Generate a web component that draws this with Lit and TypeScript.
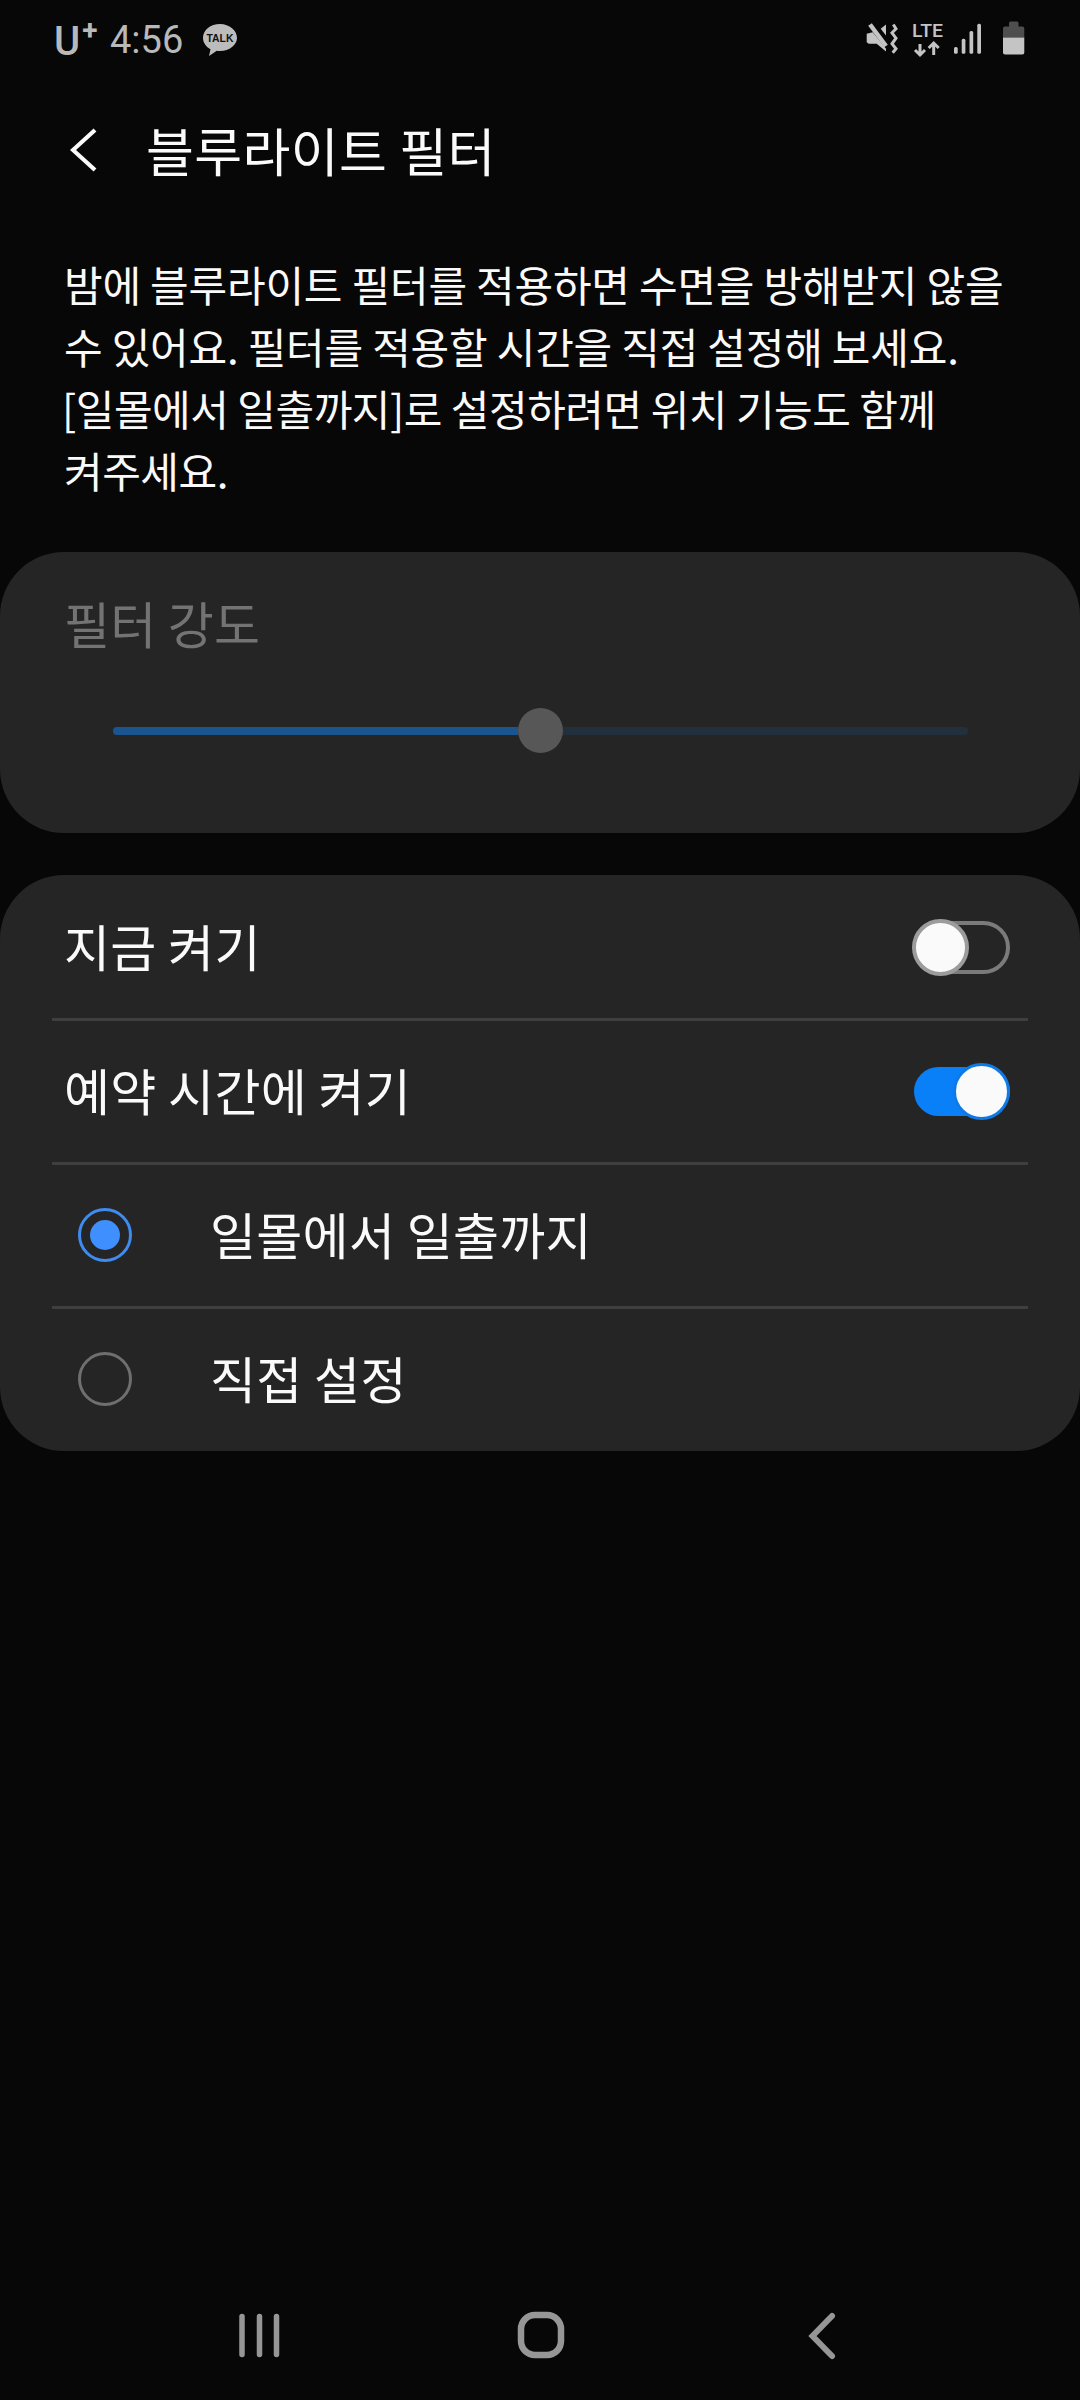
import { LitElement, html, css } from "lit";
import { customElement } from "lit/decorators.js";

@customElement("app-root")
export class AppRoot extends LitElement {
  static styles = css`
    :host { display: block; width: 1080px; height: 2400px; background: #070707; color: #fafafa; font-family: "Noto Sans CJK KR", "Noto Sans", sans-serif; overflow: hidden; }
    .page { height: 2400px; display: flex; flex-direction: column; }
    .status { height: 79px; flex: none; display: flex; align-items: center; padding: 0 55px 0 54px; color: #b9b9b9; }
    .carrier { font-family: "Roboto", sans-serif; font-size: 40px; font-weight: 500; line-height: 1; display: flex; align-items: flex-start; width: 56px; margin-top: 4px; }
    .carrier sup { font-size: 28px; line-height: 1; margin: -5px 0 0 2px; font-weight: 700; }
    .time { font-family: "Roboto", sans-serif; font-size: 38px; line-height: 1; }
    .talk { margin-left: 19px; display: block; }
    .spacer { flex: 1; }
    .sicons { display: block; }
    .appbar { height: 142px; flex: none; display: flex; align-items: center; padding-left: 70px; }
    .appbar svg { display: block; flex: none; }
    .appbar h1 { margin: 0 0 0 48px; font-size: 52px; font-weight: 400; line-height: 60px; letter-spacing: 0.4px; white-space: nowrap; }
    .desc { margin: 0; padding: 32px 30px 0 64px; font-size: 42px; line-height: 62px; letter-spacing: -0.2px; height: 331px; box-sizing: border-box; }
    .desc div { white-space: nowrap; }
    .desc .tight { letter-spacing: -0.47px; }
    .desc .bracket { margin-left: -2px; }
    .card { background: #252525; border-radius: 64px; }
    .strength { height: 281px; box-sizing: border-box; padding: 40px 0 0 64px; }
    .strength .label { font-size: 50px; line-height: 60px; color: #737373; letter-spacing: 0.2px; }
    .slider { margin: 56px 112px 0 49px; height: 45px; display: flex; align-items: center; }
    .fill { width: 405px; height: 8px; background: #1b5590; border-radius: 4px 0 0 4px; }
    .thumb { width: 45px; height: 45px; border-radius: 50%; background: #575757; flex: none; }
    .rest { flex: 1; height: 8px; background: #22303e; border-radius: 0 4px 4px 0; }
    .options { margin-top: 42px; height: 576px; display: flex; flex-direction: column; }
    .row { height: 144px; flex: none; box-sizing: border-box; display: flex; align-items: center; font-size: 50px; letter-spacing: 0.3px; padding: 0 70px 0 64px; white-space: nowrap; }
    .row .txt { flex: 1; line-height: 60px; padding-bottom: 5px; }
    .row.opt { padding-left: 78px; }
    .row.opt .txt { margin-left: 78px; }
    .divider { height: 3px; margin: -1px 52px -2px; background: #3f3f3f; flex: none; position: relative; }
    .radio { width: 54px; height: 54px; box-sizing: border-box; border-radius: 50%; border: 3px solid #6f6f6f; flex: none; display: flex; align-items: center; justify-content: center; }
    .radio.on { border-color: #3f8cf0; }
    .radio.on i { width: 30px; height: 30px; border-radius: 50%; background: #3f8fff; display: block; }
    .sw { width: 96px; height: 57px; position: relative; flex: none; }
    .sw .track { position: absolute; left: 0; right: 0; box-sizing: border-box; border-radius: 30px; }
    .sw .knob { position: absolute; top: 0; width: 57px; height: 57px; box-sizing: border-box; border-radius: 50%; background: #fafafa; }
    .sw.off .track { top: 2px; height: 53px; border: 4px solid #7b7b7b; }
    .sw.off .knob { left: -2px; border: 4px solid #9c9c9c; }
    .sw.on .track { top: 4px; height: 49px; background: #0a80f8; }
    .sw.on .knob { left: 39px; border: 3px solid #0f7ae5; }
    .nav { height: 152px; flex: none; display: block; }
  `;

  render() {
    return html`<div class="page">
      <div class="status">
        <div class="carrier">U<sup>+</sup></div>
        <div class="time">4:56</div>
        <svg class="talk" width="36" height="34" viewBox="0 0 36 34">
          <path d="M18 1C8.500 1 1 7.200 1 14.800 1 20 4.300 24 8.500 26.300L7 33l7.800-5.200c1 .1 2.100.2 3.200.2 9.500 0 17-6 17-13.200S27.500 1 18 1z" fill="#bcbcbc"/>
          <text x="18" y="19" text-anchor="middle" font-family="Liberation Sans, sans-serif" font-size="11" font-weight="700" fill="#111" textLength="27" lengthAdjust="spacingAndGlyphs">TALK</text>
        </svg>
        <div class="spacer"></div>
        <svg class="sicons" width="161" height="40" viewBox="0 0 161 40">
          <path d="M2.700 13.800L8.700 12.200 22 28.800V31.500L12.700 23.800H4.700L2.700 22.200z" fill="#c4c4c4"/>
          <path d="M16.700 8.800L22 4.500V15.500z" fill="#c4c4c4"/>
          <path d="M6 4.500L22 26" stroke="#c4c4c4" stroke-width="4.500" fill="none"/>
          <path d="M29.300 4.500L32 8.800 28 12.800 32 18.200 28 23.800 32 28.800 28.700 32.800" fill="none" stroke="#c4c4c4" stroke-width="3"/>
          <text x="48" y="17" font-family="Roboto, sans-serif" font-size="19" font-weight="500" fill="#c4c4c4" textLength="31" lengthAdjust="spacingAndGlyphs">LTE</text>
          <path d="M56 24v11M51 30l5 5 5-5" fill="none" stroke="#c4c4c4" stroke-width="3"/>
          <path d="M69.700 35V23M64.700 28l5-5 5 5" fill="none" stroke="#c4c4c4" stroke-width="3"/>
          <g fill="#c4c4c4">
            <rect x="90" y="27" width="3.700" height="6.800" rx="1.500"/>
            <rect x="97.700" y="18.800" width="3.700" height="15" rx="1.500"/>
            <rect x="105.500" y="11" width="3.700" height="22.800" rx="1.500"/>
            <rect x="113.300" y="3.800" width="3.700" height="30" rx="1.500"/>
          </g>
          <path d="M146.500 1.500h6.500q1.500 0 1.500 1.500v3.500h3.800q2 0 2 2V17.500H139V8.500q0-2 2-2h4V3q0-1.500 1.500-1.500z" fill="#4e4e4e"/>
          <path d="M139 17.500h21.300V32.500q0 2-2 2H141q-2 0-2-2z" fill="#c4c4c4"/>
        </svg>
      </div>

      <div class="appbar">
        <svg width="28" height="44" viewBox="0 0 28 44"><path d="M25 2L3 22l22 20" fill="none" stroke="#fafafa" stroke-width="4.200"/></svg>
        <h1>블루라이트 필터</h1>
      </div>

      <div class="desc">
        <div>밤에 블루라이트 필터를 적용하면 수면을 방해받지 않을</div>
        <div>수 있어요. 필터를 적용할 시간을 직접 설정해 보세요.</div>
        <div class="tight bracket">[일몰에서 일출까지]로 설정하려면 위치 기능도 함께</div>
        <div class="tight">켜주세요.</div>
      </div>

      <div class="card strength">
        <div class="label">필터 강도</div>
        <div class="slider">
          <div class="fill"></div>
          <div class="thumb"></div>
          <div class="rest"></div>
        </div>
      </div>

      <div class="card options">
        <div class="row">
          <div class="txt">지금 켜기</div>
          <div class="sw off"><div class="track"></div><div class="knob"></div></div>
        </div>
        <div class="divider"></div>
        <div class="row">
          <div class="txt">예약 시간에 켜기</div>
          <div class="sw on"><div class="track"></div><div class="knob"></div></div>
        </div>
        <div class="divider"></div>
        <div class="row opt">
          <div class="radio on"><i></i></div>
          <div class="txt">일몰에서 일출까지</div>
        </div>
        <div class="divider"></div>
        <div class="row opt">
          <div class="radio"></div>
          <div class="txt">직접 설정</div>
        </div>
      </div>

      <div class="spacer"></div>

      <svg class="nav" width="1080" height="152" viewBox="0 2248 1080 152">
        <g stroke="#969696" stroke-width="5.500" stroke-linecap="round" fill="none">
          <path d="M242 2316.500v38M259.500 2316.500v38M276.500 2316.500v38"/>
          <rect x="521" y="2315" width="40" height="40" rx="14" stroke-width="6.500"/>
          <path d="M832 2316l-19.500 20 19.500 20" stroke-width="6" stroke-linejoin="miter"/>
        </g>
      </svg>
    </div>`;
  }
}
